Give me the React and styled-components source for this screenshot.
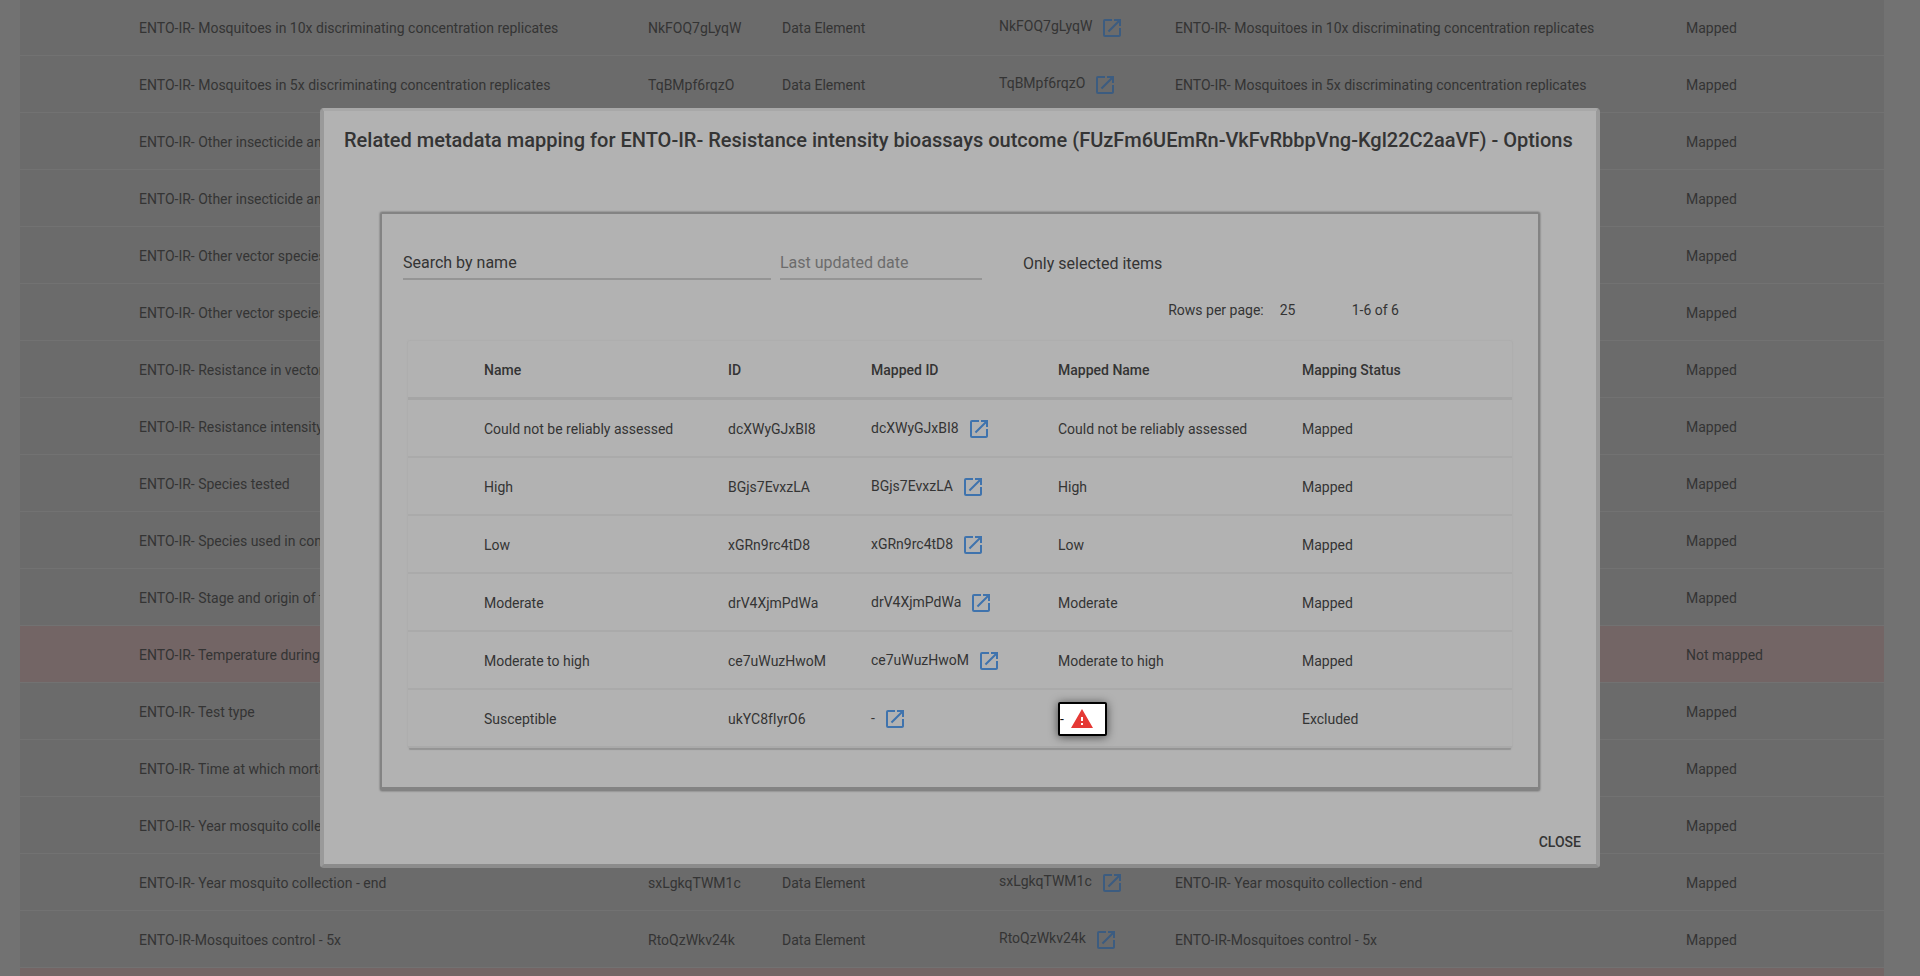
import React from "react";
import styled, { createGlobalStyle } from "styled-components";
import { MdOpenInNew, MdWarning } from "react-icons/md";

const GlobalStyle = createGlobalStyle`
  * { box-sizing: border-box; }
  body {
    margin: 0;
    background: #727272;
    font-family: Roboto, "Liberation Sans", sans-serif;
    font-size: 14px;
    line-height: 20px;
    color: #343434;
  }
  input, select, button { font: inherit; color: inherit; }
`;

const Page = styled.main`
  height: 100vh;
  overflow: hidden;
  padding: 0 36px 0 20px;
`;

const Table = styled.table`
  width: 100%;
  table-layout: fixed;
  border-collapse: separate;
  border-spacing: 0;
  text-align: left;
  white-space: nowrap;

  td, th { padding: 2px 0 0; }
`;

const PageTable = styled(Table)`
  margin-top: -1px;
  background: #6b6b6b;
`;

const PageRow = styled.tr`
  background: ${(p) => (p.$alert ? "#736565" : "transparent")};

  td {
    height: 57px;
    border-bottom: 1px solid #727272;
  }
`;

const ExternalLink = styled.a`
  display: flex;
  align-items: center;
  gap: 8px;
  color: inherit;
  text-decoration: none;

  span { padding-bottom: ${(p) => (p.$bright ? 2 : 4)}px; }
  svg { color: ${(p) => (p.$bright ? "#3f73ad" : "#3c5c80")}; }
`;

const Overlay = styled.div`
  position: fixed;
  inset: 0;
  display: flex;
  align-items: center;
  justify-content: center;
`;

const Dialog = styled.section`
  width: 100%;
  max-width: 1280px;
  background: #b2b2b2;
  border: solid;
  border-width: 3px 4px 4px;
  border-color: #a8a8a8 #9a9a9a #8c8c8c;
  border-radius: 4px;
  display: flex;
  flex-direction: column;
`;

const Title = styled.h2`
  margin: 0;
  padding: 13px 20px 0;
  font-size: 20px;
  font-weight: 500;
  line-height: 32px;
  white-space: nowrap;
`;

const Panel = styled.div`
  margin: 56px 56px 33px;
  padding: 34px 0 39px;
  border: 2px solid #838383;
  border-bottom-width: 4px;
  border-radius: 2px;
  box-shadow: 0 0 2px rgba(0, 0, 0, 0.5);
`;

const Filters = styled.form`
  display: flex;
  align-items: center;
  padding-left: 21px;
  font-size: 16px;
`;

const Field = styled.input`
  width: ${(p) => p.$width}px;
  height: 32px;
  margin-right: 9px;
  padding: 0 0 2px;
  border: 0;
  border-bottom: 2px solid #959595;
  border-radius: 0;
  background: transparent;
  outline: 0;

  &::placeholder {
    color: ${(p) => (p.$muted ? "#6c6c6c" : "#343434")};
    opacity: 1;
  }
`;

const Toggle = styled.label`
  display: flex;
  align-items: center;

  input {
    appearance: none;
    width: 24px;
    height: 24px;
    margin: 0 8px 0 0;
  }
`;

const Pagination = styled.div`
  display: flex;
  align-items: center;
  justify-content: flex-end;
  height: 24px;
  margin: 18px 139px 19px 0;

  select {
    appearance: none;
    width: 56px;
    margin: 0 16px;
    padding: 0;
    border: 0;
    background: transparent;
  }
`;

const OptionsFrame = styled.div`
  margin: 0 26px;
  border-radius: 2px;
  box-shadow: 0 3px 1px -1px #949494, 0 0 1px 1px #adadad;
`;

const OptionsTable = styled(Table)`
  th {
    height: 59px;
    font-weight: 500;
    border-bottom: 3px solid #a5a5a5;
  }
  td {
    height: 58px;
    border-bottom: 2px solid #aaaaaa;
  }
`;

const Warning = styled.div`
  display: flex;
  align-items: center;
  width: 49px;
  height: 34px;
  gap: 6px;
  background: #fff;
  color: #111;
  border: 2px solid #000;
  border-radius: 2px;
  box-shadow: 0 1px 10px rgba(0, 0, 0, 0.6);

  svg { color: #e53935; }
`;

const CloseButton = styled.button`
  align-self: flex-end;
  height: 36px;
  margin: 0 7px 4px;
  padding: 0 8px;
  border: 0;
  background: transparent;
  font-weight: 500;
`;

const rows = [
  { name: "ENTO-IR- Mosquitoes in 10x discriminating concentration replicates", id: "NkFOQ7gLyqW" },
  { name: "ENTO-IR- Mosquitoes in 5x discriminating concentration replicates", id: "TqBMpf6rqzO" },
  { name: "ENTO-IR- Other insecticide and" },
  { name: "ENTO-IR- Other insecticide and" },
  { name: "ENTO-IR- Other vector species" },
  { name: "ENTO-IR- Other vector species" },
  { name: "ENTO-IR- Resistance in vector" },
  { name: "ENTO-IR- Resistance intensity" },
  { name: "ENTO-IR- Species tested" },
  { name: "ENTO-IR- Species used in control" },
  { name: "ENTO-IR- Stage and origin of the" },
  { name: "ENTO-IR- Temperature during", status: "Not mapped", alert: true },
  { name: "ENTO-IR- Test type" },
  { name: "ENTO-IR- Time at which mortality" },
  { name: "ENTO-IR- Year mosquito collection" },
  { name: "ENTO-IR- Year mosquito collection - end", id: "sxLgkqTWM1c" },
  { name: "ENTO-IR-Mosquitoes control - 5x", id: "RtoQzWkv24k" },
  { name: "", status: "", alert: true },
];

const options = [
  { name: "Could not be reliably assessed", id: "dcXWyGJxBI8" },
  { name: "High", id: "BGjs7EvxzLA" },
  { name: "Low", id: "xGRn9rc4tD8" },
  { name: "Moderate", id: "drV4XjmPdWa" },
  { name: "Moderate to high", id: "ce7uWuzHwoM" },
  { name: "Susceptible", id: "ukYC8fIyrO6", excluded: true },
];

const pageColumns = [119, 509, 134, 217, 176, 511, 198];
const optionColumns = [76, 244, 143, 187, 244, 210];

function Columns({ widths }) {
  return (
    <colgroup>
      {widths.map((width, i) => (
        <col key={i} width={width} />
      ))}
    </colgroup>
  );
}

function MappedId({ id, bright }) {
  return (
    <ExternalLink href="#" $bright={bright}>
      <span>{id}</span>
      <MdOpenInNew size={24} />
    </ExternalLink>
  );
}

export default function App() {
  return (
    <>
      <GlobalStyle />
      <Page>
        <PageTable>
          <Columns widths={pageColumns} />
          <tbody>
            {rows.map(({ name, id, status = "Mapped", alert }, i) => (
              <PageRow key={i} $alert={alert}>
                <td />
                <td>{name}</td>
                <td>{id}</td>
                <td>{id && "Data Element"}</td>
                <td>{id && <MappedId id={id} />}</td>
                <td>{id && name}</td>
                <td>{status}</td>
              </PageRow>
            ))}
          </tbody>
        </PageTable>
      </Page>
      <Overlay>
        <Dialog role="dialog" aria-labelledby="dialog-title">
          <Title id="dialog-title">
            Related metadata mapping for ENTO-IR- Resistance intensity bioassays outcome
            (FUzFm6UEmRn-VkFvRbbpVng-Kgl22C2aaVF) - Options
          </Title>
          <Panel>
            <Filters>
              <Field $width={368} type="search" aria-label="Search by name" placeholder="Search by name" />
              <Field $width={202} $muted type="text" aria-label="Last updated date" placeholder="Last updated date" />
              <Toggle>
                <input type="checkbox" />
                Only selected items
              </Toggle>
            </Filters>
            <Pagination>
              <label htmlFor="page-size">Rows per page:</label>
              <select id="page-size" defaultValue="25">
                <option>25</option>
              </select>
              <span>1-6 of 6</span>
            </Pagination>
            <OptionsFrame>
              <OptionsTable>
                <Columns widths={optionColumns} />
                <thead>
                  <tr>
                    <th />
                    <th>Name</th>
                    <th>ID</th>
                    <th>Mapped ID</th>
                    <th>Mapped Name</th>
                    <th>Mapping Status</th>
                  </tr>
                </thead>
                <tbody>
                  {options.map(({ name, id, excluded }) => (
                    <tr key={id}>
                      <td />
                      <td>{name}</td>
                      <td>{id}</td>
                      <td>
                        <MappedId id={excluded ? "-" : id} bright />
                      </td>
                      <td>
                        {excluded ? (
                          <Warning>
                            <span>-</span>
                            <MdWarning size={24} />
                          </Warning>
                        ) : (
                          name
                        )}
                      </td>
                      <td>{excluded ? "Excluded" : "Mapped"}</td>
                    </tr>
                  ))}
                </tbody>
              </OptionsTable>
            </OptionsFrame>
          </Panel>
          <CloseButton type="button">CLOSE</CloseButton>
        </Dialog>
      </Overlay>
    </>
  );
}
